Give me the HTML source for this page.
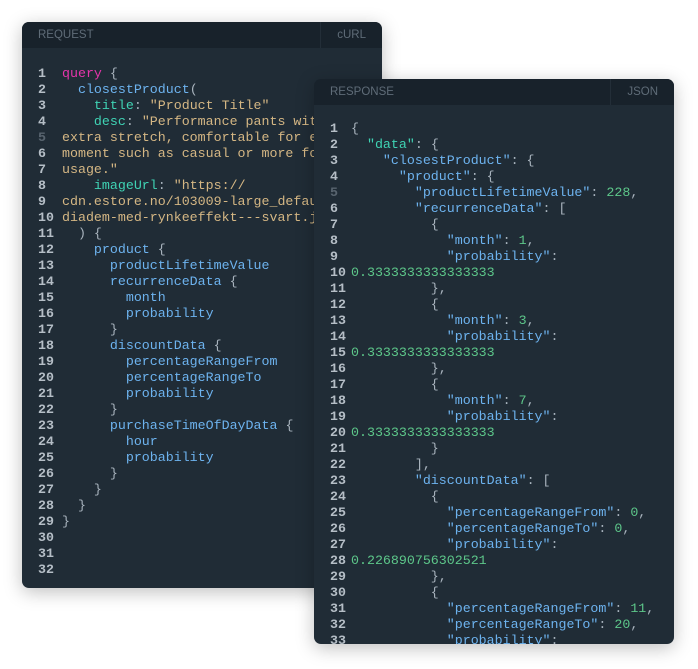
<!DOCTYPE html>
<html><head><style>
body{margin:0;width:698px;height:669px;background:#fff;position:relative;overflow:hidden;font-family:"Liberation Mono",monospace}
.p{position:absolute;width:360px;background:#202c36;border-radius:7px;overflow:hidden;box-shadow:0 4px 18px rgba(0,0,0,.25)}
.h{height:26px;background:#18222b;position:relative;font-family:"Liberation Sans",sans-serif;font-size:11.5px;color:#5f6c78;line-height:26px}
.h .l{position:absolute;left:16px}
.h .r{position:absolute;right:0;top:0;height:26px;padding:0 16px;border-left:1px solid #232e38}
.c{position:absolute;font-size:13.3px;line-height:16px;white-space:pre;color:#a8b3bd}
.n{position:absolute;font-size:13.3px;line-height:16px;white-space:pre;color:#b5bec6;font-weight:bold}
.k{color:#e535ab}.f{color:#6db3ef}.a{color:#3fd3b4}.s{color:#d5b784}.g{color:#5dc78a}.d{color:#58646f}
</style></head><body>
<div class="p" style="left:22px;top:22px;height:566px">
<div class="h"><span class="l">REQUEST</span><span class="r">cURL</span></div>
<div class="n" style="left:16px;top:44px">1
2
3
4
<span class="d">5</span>
6
7
8
9
10
11
12
13
14
15
16
17
18
19
20
21
22
23
24
25
26
27
28
29
30
31
32</div>
<div class="c" style="left:40px;top:44px"><span class="k">query</span> {
  <span class="f">closestProduct</span>(
    <span class="a">title</span>: <span class="s">"Product Title"</span>
    <span class="a">desc</span>: <span class="s">"Performance pants with</span>
<span class="s">extra stretch, comfortable for every</span>
<span class="s">moment such as casual or more formal</span>
<span class="s">usage."</span>
    <span class="a">imageUrl</span>: <span class="s">"https://</span>
<span class="s">cdn.estore.no/103009-large_default/</span>
<span class="s">diadem-med-rynkeeffekt---svart.jpg"</span>
  ) {
    <span class="f">product</span> {
      <span class="f">productLifetimeValue</span>
      <span class="f">recurrenceData</span> {
        <span class="f">month</span>
        <span class="f">probability</span>
      }
      <span class="f">discountData</span> {
        <span class="f">percentageRangeFrom</span>
        <span class="f">percentageRangeTo</span>
        <span class="f">probability</span>
      }
      <span class="f">purchaseTimeOfDayData</span> {
        <span class="f">hour</span>
        <span class="f">probability</span>
      }
    }
  }
}</div>
</div>
<div class="p" style="left:314px;top:79px;height:565px">
<div class="h"><span class="l">RESPONSE</span><span class="r">JSON</span></div>
<div class="n" style="left:16px;top:42px">1
2
3
4
<span class="d">5</span>
6
7
8
9
10
11
12
13
14
15
16
17
18
19
20
21
22
23
24
25
26
27
28
29
30
31
32
33</div>
<div class="c" style="left:37px;top:42px">{
  <span class="a">"data"</span>: {
    <span class="f">"closestProduct"</span>: {
      <span class="f">"product"</span>: {
        <span class="f">"productLifetimeValue"</span>: <span class="g">228</span>,
        <span class="f">"recurrenceData"</span>: [
          {
            <span class="f">"month"</span>: <span class="g">1</span>,
            <span class="f">"probability"</span>:
<span class="g">0.3333333333333333</span>
          },
          {
            <span class="f">"month"</span>: <span class="g">3</span>,
            <span class="f">"probability"</span>:
<span class="g">0.3333333333333333</span>
          },
          {
            <span class="f">"month"</span>: <span class="g">7</span>,
            <span class="f">"probability"</span>:
<span class="g">0.3333333333333333</span>
          }
        ],
        <span class="f">"discountData"</span>: [
          {
            <span class="f">"percentageRangeFrom"</span>: <span class="g">0</span>,
            <span class="f">"percentageRangeTo"</span>: <span class="g">0</span>,
            <span class="f">"probability"</span>:
<span class="g">0.226890756302521</span>
          },
          {
            <span class="f">"percentageRangeFrom"</span>: <span class="g">11</span>,
            <span class="f">"percentageRangeTo"</span>: <span class="g">20</span>,
            <span class="f">"probability"</span>:</div>
</div>
</body></html>
